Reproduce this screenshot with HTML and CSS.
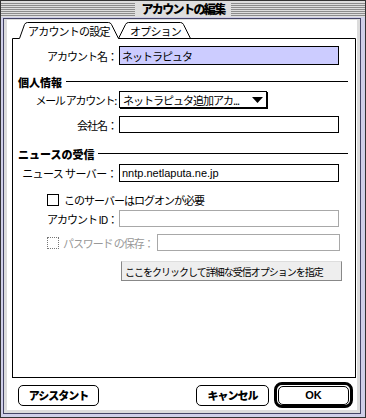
FILE: index.html
```html
<!DOCTYPE html>
<html lang="ja">
<head>
<meta charset="utf-8">
<link rel="stylesheet" href="styles.css">
</head>
<body>
<div class="window">
  <div class="titlebar"><span class="title">アカウントの編集</span></div>
  <div class="body">
    <div class="frame">
      <div class="content">
        <svg class="tabs" width="344" height="17" viewBox="0 0 344 17">
          <path class="tabline" d="M0.5 17 V16.5 H7.5 L12.5 2.5 Q13.5 0.5 15.5 0.5 H96.5 Q98.5 0.5 99.5 2.5 L106.5 16.5 L113.5 2.5 Q114.5 0.5 116.5 0.5 H168.5 Q170.5 0.5 171.5 2.5 L178.5 16.5 M106.5 16.5 H343.5 V17"/>
          <text class="tabtext" x="16" y="14">アカウントの設定</text>
          <text class="tabtext" x="118" y="14">オプション</text>
        </svg>
        <div class="panel">
          <div class="row r1">
            <span class="label">アカウント名：</span>
            <span class="field focus">ネットラピュタ</span>
          </div>
          <div class="section s1"><span class="sectitle">個人情報</span><span class="rule"></span></div>
          <div class="row r2">
            <span class="label tight">メール アカウント:</span>
            <span class="popup"><span class="poptext">ネットラピュタ追加アカ...</span><svg class="arrow" width="11" height="6" viewBox="0 0 11 6"><path d="M0 0 H11 L5.5 6 Z"/></svg></span>
          </div>
          <div class="row r3">
            <span class="label">会社名：</span>
            <span class="field"></span>
          </div>
          <div class="section s2"><span class="sectitle">ニュースの受信</span><span class="rule"></span></div>
          <div class="row r4">
            <span class="label wide">ニュース サーバー：</span>
            <span class="field latin">nntp.netlaputa.ne.jp</span>
          </div>
          <div class="row r5 indent">
            <span class="checkbox"></span>
            <span class="cblabel">このサーバーはログオンが必要</span>
          </div>
          <div class="row r6 indent">
            <span class="label2">アカウント ID：</span>
            <span class="field disabled"></span>
          </div>
          <div class="row r7 indent">
            <span class="checkbox dotted"></span>
            <span class="cblabel dim">パスワード の保存：</span>
            <span class="field disabled grow"></span>
          </div>
          <div class="row r8">
            <span class="bevel">ここをクリックして詳細な受信オプションを指定</span>
          </div>
        </div>
        <div class="footer">
          <span class="btn assist">アシスタント</span>
          <span class="spacer"></span>
          <span class="btn cancel">キャンセル</span>
          <span class="okring"><span class="btn ok">OK</span></span>
        </div>
      </div>
    </div>
  </div>
</div>
</body>
</html>
```
FILE: styles.css
```css
* { box-sizing: border-box; }
html, body { margin: 0; padding: 0; background: #fff; }
body {
  font-family: "Noto Sans CJK JP", "Liberation Sans", sans-serif;
  font-size: 11px;
  color: #000;
}
.window {
  width: 366px;
  height: 418px;
  border: 1px solid #333;
  display: flex;
  flex-direction: column;
  background: #cfcfe8;
}
.titlebar {
  height: 16px;
  flex: none;
  display: flex;
  justify-content: center;
  align-items: center;
  background: repeating-linear-gradient(to bottom, #dedede 0px, #dedede 1px, #8c8c8c 1px, #8c8c8c 2px);
  background-size: 100% 14px;
  background-repeat: no-repeat;
  background-position: 0 1px;
  background-color: #dedede;
}
.title {
  background: #dedede;
  padding: 0 6px;
  font-weight: 900;
  font-size: 12px;
  letter-spacing: -1.6px;
  line-height: 16px;
  height: 16px;
}
.body {
  flex: 1;
  padding: 1px 4px 3px 2px;
  display: flex;
}
.frame {
  flex: 1;
  border: 1px solid #444466;
  background: #dcdcdc;
  padding: 1px 3px 3px 3px;
  display: flex;
}
.content {
  flex: 1;
  background: #fff;
  display: flex;
  flex-direction: column;
  padding: 2px 1px 0 5px;
}
.tabs { display: block; flex: none; }
.tabline { fill: none; stroke: #000; stroke-width: 1; }
.tabtext { font-size: 11px; letter-spacing: -0.8px; fill: #000; }
.panel {
  width: 344px;
  height: 339px;
  border: 1px solid #000;
  border-top: none;
  display: flex;
  flex-direction: column;
  flex: none;
}
.row { display: flex; align-items: center; flex: none; }
.label {
  width: 106px;
  text-align: right;
  letter-spacing: -1px;
  white-space: nowrap;
  padding-right: 2px;
}
.label.tight { letter-spacing: -1.3px; padding-right: 3px; }
.label.wide { letter-spacing: -0.6px; }
.label2 { width: 72px; letter-spacing: -1px; white-space: nowrap; }
.field {
  width: 220px;
  height: 17px;
  border: 1px solid #000;
  background: #fff;
  display: flex;
  align-items: center;
  padding-left: 2px;
  letter-spacing: -1px;
  white-space: nowrap;
}
.field.latin { font-family: "Liberation Sans", sans-serif; letter-spacing: 0; }
.field.focus { height: 19px; background: #ccccff; }
.field.disabled { border-color: #a8a8a8; }
.field.grow { width: 183px; }
.r1 { margin-top: 7px; }
.section { display: flex; align-items: center; height: 13px; padding-left: 5px; padding-right: 7px; flex: none; }
.sectitle { font-weight: 900; font-size: 11px; white-space: nowrap; letter-spacing: 0; }
.rule { flex: 1; height: 1px; background: #000; margin-left: 4px; }
.s1 { margin-top: 10px; }
.r2 { margin-top: 3px; }
.popup {
  width: 148px;
  height: 17px;
  border: 1px solid #000;
  box-shadow: 1px 1px 0 #000;
  display: flex;
  align-items: center;
  padding-left: 3px;
  padding-right: 3px;
  letter-spacing: -1px;
  white-space: nowrap;
}
.poptext { flex: 1; }
.arrow { display: block; fill: #000; }
.r3 { margin-top: 8px; }
.s2 { margin-top: 14px; }
.r4 { margin-top: 4px; }
.r4 .field { height: 18px; }
.indent { padding-left: 34px; }
.r5 { margin-top: 10px; height: 15px; }
.checkbox { width: 12px; height: 12px; border: 1px solid #000; flex: none; }
.checkbox.dotted { border: 1px dotted #777; }
.cblabel { margin-left: 5px; letter-spacing: -1px; white-space: nowrap; }
.cblabel.dim { color: #999; margin-left: 4px; width: 94px; letter-spacing: -1.1px; flex: none; }
.r6 { margin-top: 3px; }
.r7 { margin-top: 7px; }
.r8 { margin-top: 10px; padding-left: 108px; }
.bevel {
  width: 221px;
  height: 20px;
  background: #eeeeee;
  border-top: 1px solid #dddddd;
  border-left: 1px solid #888;
  border-right: 1px solid #888;
  border-bottom: 1px solid #888;
  display: flex;
  align-items: center;
  padding-left: 3px;
  font-size: 10px;
  letter-spacing: -1px;
  white-space: nowrap;
}
.footer {
  display: flex;
  align-items: center;
  margin-top: 4px;
  height: 26px;
  padding-left: 6px;
  flex: none;
}
.btn {
  height: 21px;
  border: 1px solid #000;
  border-radius: 5px;
  display: flex;
  align-items: center;
  justify-content: center;
  font-weight: 900;
  font-size: 11px;
  letter-spacing: -1px;
  background: #fff;
}
.assist { width: 81px; }
.spacer { flex: 1; }
.cancel { width: 73px; margin-right: 5px; }
.okring {
  width: 79px;
  height: 26px;
  border: 3px solid #000;
  border-radius: 8px;
  padding: 0 1px;
  display: flex;
  align-items: center;
  margin-right: 3px;
}
.ok { width: 100%; height: 19px; font-family: "Liberation Sans", sans-serif; letter-spacing: 0; }
```
